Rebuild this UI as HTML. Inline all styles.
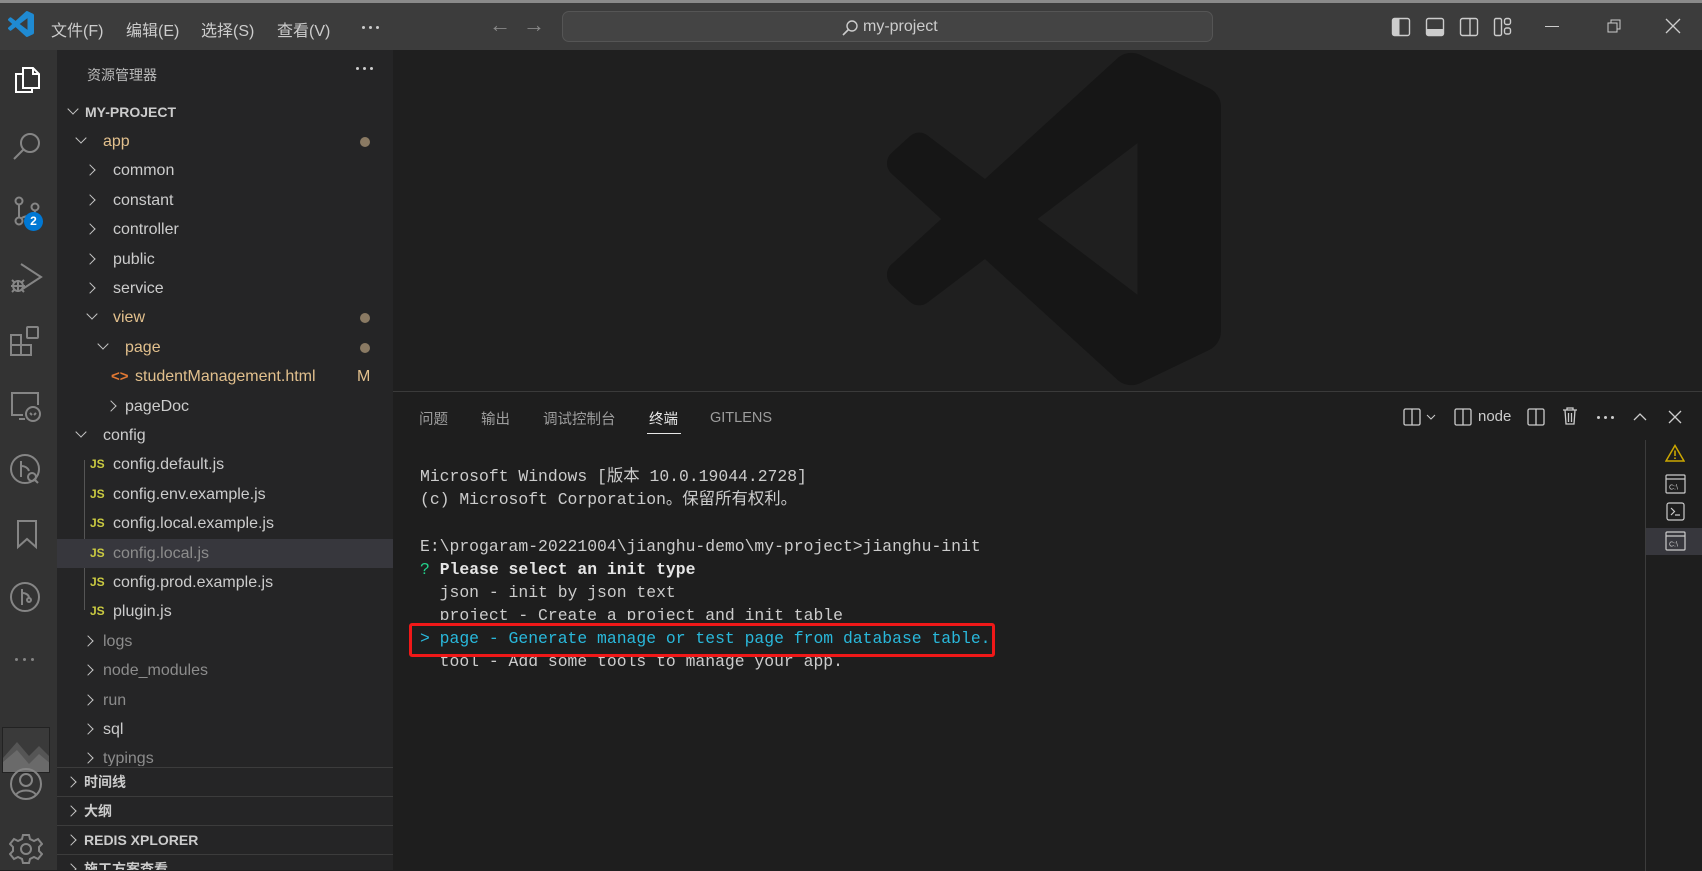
<!DOCTYPE html>
<html><head><meta charset="utf-8">
<style>
*{margin:0;padding:0;box-sizing:border-box}
body{width:1702px;height:870px;overflow:hidden;background:#1f1f1f;font-family:"Liberation Sans","Noto Sans CJK SC",sans-serif;color:#ccc;position:relative}
.a{position:absolute}
#title{left:0;top:0;width:1702px;height:50px;background:#3c3c3c;border-top:3px solid #8a8a8a}
.menu{top:14px;font-size:16px;color:#ccc}
#act{left:0;top:50px;width:57px;height:820px;background:#333}
#side{left:57px;top:50px;width:336px;height:820px;background:#252526;overflow:hidden}
.row{position:absolute;left:0;width:336px;height:29.4px;line-height:29.4px;font-size:16px;white-space:nowrap}
.chev{position:absolute;top:10px;width:8px;height:8px;border-right:1.4px solid #c5c5c5;border-bottom:1.4px solid #c5c5c5}
.r{transform:rotate(-45deg)}
.d{transform:rotate(45deg);top:7px}
.js{position:absolute;font-size:12px;font-weight:bold;color:#cbcb41;top:0}
.dot{position:absolute;left:303px;top:10px;width:10px;height:10px;border-radius:5px;background:#8a7a63}
.mod{color:#e2c08d}
.ign{color:#8c8c8c}
.sec{position:absolute;left:0;width:336px;height:29px;line-height:29px;font-size:14px;font-weight:bold;color:#ccc;border-top:1px solid #3c3c3c}
#panel{left:393px;top:391px;width:1309px;height:479px;background:#1e1e1e;border-top:1px solid #3a3a3a}
.tab{top:16px;font-size:14.5px;color:#9d9d9d}
.term{position:absolute;left:27px;font-family:"Liberation Mono","Noto Sans CJK SC",monospace;font-size:16.4px;color:#ccc;white-space:pre;line-height:23px}
.dots3{position:absolute;display:flex;gap:4px}
.dots3 i{display:block;width:3px;height:3px;border-radius:2px;background:#ccc}
</style></head><body>

<div id="title" class="a">
  <svg class="a" style="left:8px;top:8px" width="26" height="26" viewBox="0 0 100 100"><path fill="#1f8ad2" d="M96.46 10.8L75.86.87a6.23 6.23 0 0 0-7.1 1.21L29.33 38.04 12.16 25a4.16 4.16 0 0 0-5.32.24l-5.5 5a4.17 4.17 0 0 0 0 6.16L16.23 50 1.33 63.6a4.170 4.170 0 0 0 0 6.16l5.5 5a4.16 4.16 0 0 0 5.32.24l17.17-13.04 39.43 35.96a6.22 6.22 0 0 0 7.1 1.21l20.6-9.92a6.24 6.24 0 0 0 3.540-5.63V16.43a6.24 6.24 0 0 0-3.54-5.63zM75 72.7L45.08 50 75 27.3z"/></svg>
  <div class="a menu" style="left:51px">文件(F)</div>
  <div class="a menu" style="left:126px">编辑(E)</div>
  <div class="a menu" style="left:201px">选择(S)</div>
  <div class="a menu" style="left:277px">查看(V)</div>
  <div class="dots3" style="left:362px;top:23px"><i></i><i></i><i></i></div>
  <div class="a" style="left:489px;top:9px;font-size:22px;color:#888">←</div>
  <div class="a" style="left:523px;top:9px;font-size:22px;color:#888">→</div>
  <div class="a" style="left:562px;top:8px;width:651px;height:31px;background:#444;border:1px solid #555;border-radius:7px"></div>
  <svg class="a" style="left:841px;top:16px" width="18" height="18" viewBox="0 0 18 18"><circle cx="11" cy="7" r="5" fill="none" stroke="#ccc" stroke-width="1.4"/><path d="M7.5 10.5L2 16" stroke="#ccc" stroke-width="1.6"/></svg>
  <div class="a" style="left:863px;top:15px;font-size:16px;color:#ccc">my-project</div>
  <svg class="a" style="left:1391px;top:14px" width="20" height="20" viewBox="0 0 20 20"><rect x="1.5" y="1.5" width="17" height="17" rx="2" fill="none" stroke="#ccc" stroke-width="1.4"/><rect x="1.5" y="1.5" width="7" height="17" fill="#ccc"/></svg>
  <svg class="a" style="left:1425px;top:14px" width="20" height="20" viewBox="0 0 20 20"><rect x="1.5" y="1.5" width="17" height="17" rx="2" fill="none" stroke="#ccc" stroke-width="1.4"/><rect x="1.5" y="12" width="17" height="6.5" fill="#ccc"/></svg>
  <svg class="a" style="left:1459px;top:14px" width="20" height="20" viewBox="0 0 20 20"><rect x="1.5" y="1.5" width="17" height="17" rx="2" fill="none" stroke="#ccc" stroke-width="1.4"/><path d="M11 2v16" stroke="#ccc" stroke-width="1.4"/></svg>
  <svg class="a" style="left:1493px;top:14px" width="20" height="20" viewBox="0 0 20 20"><rect x="1.5" y="1.5" width="7" height="17" rx="1.5" fill="none" stroke="#ccc" stroke-width="1.4"/><rect x="11.5" y="1.5" width="6" height="6" rx="2" fill="none" stroke="#ccc" stroke-width="1.4"/><rect x="11.5" y="11" width="6" height="6" rx="2" fill="none" stroke="#ccc" stroke-width="1.4"/></svg>
  <div class="a" style="left:1545px;top:23px;width:14px;height:1px;background:#ccc"></div>
  <svg class="a" style="left:1607px;top:16px" width="14" height="14" viewBox="0 0 14 14"><rect x="1" y="4" width="9" height="9" fill="none" stroke="#ccc"/><path d="M4 4V1h9v9h-3" fill="none" stroke="#ccc"/></svg>
  <svg class="a" style="left:1665px;top:15px" width="16" height="16" viewBox="0 0 16 16"><path d="M1 1L15 15M15 1L1 15" stroke="#ccc" stroke-width="1.3"/></svg>
</div>

<div id="act" class="a">
  <svg class="a" style="left:11px;top:14px" width="32" height="32" viewBox="0 0 32 32" fill="none" stroke="#fff" stroke-width="2"><path d="M12 4h10l6 6v14H12z"/><path d="M22 4v6h6"/><path d="M12 10H5v18h16v-4"/></svg>
  <svg class="a" style="left:11px;top:80px" width="32" height="32" viewBox="0 0 32 32" fill="none" stroke="#858585" stroke-width="2"><circle cx="19" cy="13" r="9"/><path d="M12.5 19.5L3 29"/></svg>
  <svg class="a" style="left:11px;top:145px" width="32" height="32" viewBox="0 0 32 32" fill="none" stroke="#858585" stroke-width="2"><circle cx="8" cy="6" r="3.5"/><circle cx="8" cy="26" r="3.5"/><circle cx="24" cy="12" r="3.5"/><path d="M8 10v12M24 16c0 6-12 4-14 8"/></svg>
  <div class="a" style="left:24px;top:162px;width:19px;height:19px;border-radius:10px;background:#0078d4;color:#fff;font-size:12px;font-weight:bold;text-align:center;line-height:19px">2</div>
  <svg class="a" style="left:9px;top:210px" width="34" height="34" viewBox="0 0 34 34" fill="none" stroke="#858585" stroke-width="2"><path d="M12 4l20 13-20 13"/><circle cx="9" cy="26" r="5"/><path d="M2 26h14M9 20v12M3 20l3 3M15 20l-3 3M3 32l3-3M15 32l-3-3"/></svg>
  <svg class="a" style="left:9px;top:275px" width="34" height="34" viewBox="0 0 34 34" fill="none" stroke="#858585" stroke-width="2"><rect x="2" y="10" width="10" height="10"/><rect x="2" y="20" width="10" height="10"/><rect x="12" y="20" width="10" height="10"/><rect x="18" y="2" width="11" height="11" rx="1"/></svg>
  <svg class="a" style="left:9px;top:339px" width="34" height="34" viewBox="0 0 34 34" fill="none" stroke="#858585" stroke-width="2"><path d="M14 26H3V4h26v12M10 30h6"/><circle cx="24" cy="25" r="7"/><path d="M21 24l2 2M27 24l-2 2"/></svg>
  <svg class="a" style="left:9px;top:403px" width="34" height="34" viewBox="0 0 34 34" fill="none" stroke="#858585" stroke-width="2"><circle cx="16" cy="16" r="14"/><path d="M12 8v16M12 13c4 0 7 2 8 5"/><circle cx="23" cy="24" r="4"/><path d="M26 27l3 3"/></svg>
  <svg class="a" style="left:11px;top:468px" width="32" height="32" viewBox="0 0 32 32" fill="none" stroke="#858585" stroke-width="2"><path d="M7 3h18v26l-9-8-9 8z"/></svg>
  <svg class="a" style="left:9px;top:531px" width="34" height="34" viewBox="0 0 34 34" fill="none" stroke="#858585" stroke-width="2"><circle cx="16" cy="16" r="14"/><path d="M13 8v16M13 12c4 0 7 2 7 5"/><circle cx="20" cy="19" r="2"/></svg>
  <div class="dots3" style="left:15px;top:608px;gap:5px"><i style="background:#858585"></i><i style="background:#858585"></i><i style="background:#858585"></i></div>
  <div class="a" style="left:2px;top:677px;width:48px;height:46px;background:#3a3a3a;border:1px solid #222;overflow:hidden">
    <svg width="48" height="46" viewBox="0 0 48 46"><path d="M0 30L14 14 26 28 36 18 48 30V46H0z" fill="#555"/><path d="M0 34L14 22 26 36 36 26 48 36V46H0z" fill="#6a6a6a"/></svg>
  </div>
  <svg class="a" style="left:9px;top:717px" width="34" height="34" viewBox="0 0 34 34" fill="none" stroke="#858585" stroke-width="2"><circle cx="17" cy="17" r="15"/><circle cx="17" cy="13" r="6"/><path d="M7 28c3-6 17-6 20 0"/></svg>
  <svg class="a" style="left:9px;top:782px" width="34" height="34" viewBox="0 0 34 34" fill="none" stroke="#858585" stroke-width="2"><circle cx="17" cy="17" r="5"/><path d="M14 3h6l1 4 4 2 4-2 4 5-3 3v4l3 3-4 5-4-2-4 2-1 4h-6l-1-4-4-2-4 2-4-5 3-3v-4l-3-3 4-5 4 2 4-2z"/></svg>
</div>

<div id="side" class="a">
  <div class="a" style="left:30px;top:15px;font-size:14px;color:#bbb">资源管理器</div>
  <div class="dots3" style="left:299px;top:17px"><i></i><i></i><i></i></div>
  <div class="a" style="left:27px;top:410px;width:1px;height:150px;background:#555"></div>

  <div class="row" style="top:47.5px"><span class="chev d" style="left:12px"></span><span class="a" style="left:28px;font-size:14px;font-weight:bold">MY-PROJECT</span></div>
  <div class="row mod" style="top:77px"><span class="chev d" style="left:20px"></span><span class="a" style="left:46px">app</span><span class="dot"></span></div>
  <div class="row" style="top:106.4px"><span class="chev r" style="left:29px"></span><span class="a" style="left:56px">common</span></div>
  <div class="row" style="top:135.8px"><span class="chev r" style="left:29px"></span><span class="a" style="left:56px">constant</span></div>
  <div class="row" style="top:165.2px"><span class="chev r" style="left:29px"></span><span class="a" style="left:56px">controller</span></div>
  <div class="row" style="top:194.6px"><span class="chev r" style="left:29px"></span><span class="a" style="left:56px">public</span></div>
  <div class="row" style="top:224px"><span class="chev r" style="left:29px"></span><span class="a" style="left:56px">service</span></div>
  <div class="row mod" style="top:253.4px"><span class="chev d" style="left:31px"></span><span class="a" style="left:56px">view</span><span class="dot"></span></div>
  <div class="row mod" style="top:282.8px"><span class="chev d" style="left:42px"></span><span class="a" style="left:68px">page</span><span class="dot"></span></div>
  <div class="row mod" style="top:312.2px"><span class="a" style="left:54px;color:#e37933;font-weight:bold;font-size:15px">&lt;&gt;</span><span class="a" style="left:78px">studentManagement.html</span><span class="a" style="left:300px;font-size:16px">M</span></div>
  <div class="row" style="top:341.6px"><span class="chev r" style="left:50px"></span><span class="a" style="left:68px">pageDoc</span></div>
  <div class="row" style="top:371px"><span class="chev d" style="left:20px"></span><span class="a" style="left:46px">config</span></div>
  <div class="row" style="top:400.4px"><span class="js" style="left:33px">JS</span><span class="a" style="left:56px">config.default.js</span></div>
  <div class="row" style="top:429.8px"><span class="js" style="left:33px">JS</span><span class="a" style="left:56px">config.env.example.js</span></div>
  <div class="row" style="top:459.2px"><span class="js" style="left:33px">JS</span><span class="a" style="left:56px">config.local.example.js</span></div>
  <div class="row" style="top:488.6px;background:#37373d"><span class="js" style="left:33px">JS</span><span class="a ign" style="left:56px">config.local.js</span></div>
  <div class="row" style="top:518px"><span class="js" style="left:33px">JS</span><span class="a" style="left:56px">config.prod.example.js</span></div>
  <div class="row" style="top:547.4px"><span class="js" style="left:33px">JS</span><span class="a" style="left:56px">plugin.js</span></div>
  <div class="row ign" style="top:576.8px"><span class="chev r" style="left:27px"></span><span class="a" style="left:46px">logs</span></div>
  <div class="row ign" style="top:606.2px"><span class="chev r" style="left:27px"></span><span class="a" style="left:46px">node_modules</span></div>
  <div class="row ign" style="top:635.6px"><span class="chev r" style="left:27px"></span><span class="a" style="left:46px">run</span></div>
  <div class="row" style="top:665px"><span class="chev r" style="left:27px"></span><span class="a" style="left:46px">sql</span></div>
  <div class="row ign" style="top:694.4px;height:22px;overflow:hidden"><span class="chev r" style="left:27px"></span><span class="a" style="left:46px">typings</span></div>

  <div class="sec" style="top:717px;background:#252526"><span class="chev r" style="left:10px"></span><span class="a" style="left:27px">时间线</span></div>
  <div class="sec" style="top:746px"><span class="chev r" style="left:10px"></span><span class="a" style="left:27px">大纲</span></div>
  <div class="sec" style="top:775px"><span class="chev r" style="left:10px"></span><span class="a" style="left:27px">REDIS XPLORER</span></div>
  <div class="sec" style="top:804px"><span class="chev r" style="left:10px"></span><span class="a" style="left:27px">施工方案查看</span></div>
</div>

<svg class="a" style="left:887px;top:52px" width="334" height="339" viewBox="0 0 100 101.5" preserveAspectRatio="none"><path fill="#161616" d="M96.46 10.8L75.86.87a6.23 6.23 0 0 0-7.1 1.21L29.33 38.04 12.160 25a4.16 4.16 0 0 0-5.32.24l-5.5 5a4.17 4.17 0 0 0 0 6.16L16.23 50 1.33 63.6a4.17 4.17 0 0 0 0 6.16l5.5 5a4.16 4.16 0 0 0 5.32.24l17.17-13.04 39.43 35.96a6.22 6.22 0 0 0 7.1 1.21l20.6-9.92a6.24 6.24 0 0 0 3.54-5.63V16.43a6.24 6.24 0 0 0-3.54-5.63zM75 72.7L45.08 50 75 27.3z"/></svg>

<div id="panel" class="a">
  <div class="a tab" style="left:26px">问题</div>
  <div class="a tab" style="left:88px">输出</div>
  <div class="a tab" style="left:150px">调试控制台</div>
  <div class="a tab" style="left:256px;color:#e7e7e7">终端</div>
  <div class="a" style="left:254px;top:41px;width:34px;height:1px;background:#e7e7e7"></div>
  <div class="a tab" style="left:317px;top:18px">GITLENS</div>

  <svg class="a" style="left:1010px;top:16px" width="18" height="18" viewBox="0 0 18 18" fill="none" stroke="#ccc" stroke-width="1.3"><rect x="1" y="1" width="16" height="16" rx="1.5"/><path d="M9 1v16"/></svg>
  <svg class="a" style="left:1033px;top:22px" width="10" height="6" viewBox="0 0 10 6" fill="none" stroke="#ccc"><path d="M1 1l4 4 4-4"/></svg>
  <svg class="a" style="left:1061px;top:16px" width="18" height="18" viewBox="0 0 18 18" fill="none" stroke="#ccc" stroke-width="1.3"><rect x="1" y="1" width="16" height="16" rx="1.5"/><path d="M9 1v16"/></svg>
  <div class="a" style="left:1085px;top:16px;font-size:15px;color:#ccc">node</div>
  <svg class="a" style="left:1134px;top:16px" width="18" height="18" viewBox="0 0 18 18" fill="none" stroke="#ccc" stroke-width="1.3"><rect x="1" y="1" width="16" height="16" rx="1.5"/><path d="M9 1v16"/></svg>
  <svg class="a" style="left:1169px;top:15px" width="16" height="18" viewBox="0 0 16 18" fill="none" stroke="#ccc" stroke-width="1.3"><path d="M1 3h14M5 3V1h6v2M3 3l1 14h8l1-14M6.5 6v9M9.5 6v9"/></svg>
  <div class="dots3" style="left:1204px;top:24px"><i></i><i></i><i></i></div>
  <svg class="a" style="left:1240px;top:20px" width="14" height="9" viewBox="0 0 14 9" fill="none" stroke="#ccc" stroke-width="1.3"><path d="M1 8l6-6 6 6"/></svg>
  <svg class="a" style="left:1275px;top:18px" width="14" height="14" viewBox="0 0 14 14" stroke="#ccc" stroke-width="1.3"><path d="M1 1l12 12M13 1L1 13"/></svg>

  <div class="a" style="left:1252px;top:48px;width:1px;height:431px;background:#3c3c3c"></div>
  <div class="a" style="left:1253px;top:136px;width:56px;height:27px;background:#37373d"></div>
  <svg class="a" style="left:1272px;top:52px" width="20" height="18" viewBox="0 0 20 18"><path d="M10 1.5L19 17H1z" fill="none" stroke="#cca700" stroke-width="1.5"/><path d="M10 6.5v5.5M10 13.5v1.5" stroke="#cca700" stroke-width="1.6"/></svg>
  <svg class="a" style="left:1272px;top:82px" width="21" height="20" viewBox="0 0 21 20" fill="none" stroke="#ccc" stroke-width="1.2"><rect x="1" y="1" width="19" height="18" rx="1"/><path d="M1 5h19"/><text x="4" y="15.5" font-size="7" fill="#ccc" stroke="none" font-family="Liberation Sans">C:\</text></svg>
  <svg class="a" style="left:1273px;top:110px" width="19" height="19" viewBox="0 0 19 19" fill="none" stroke="#ccc" stroke-width="1.2"><rect x="1" y="1" width="17" height="17" rx="2"/><path d="M5 6l3.5 3.5L5 13M9 13h5"/></svg>
  <svg class="a" style="left:1272px;top:139px" width="21" height="20" viewBox="0 0 21 20" fill="none" stroke="#ccc" stroke-width="1.2"><rect x="1" y="1" width="19" height="18" rx="1"/><path d="M1 5h19"/><text x="4" y="15.5" font-size="7" fill="#ccc" stroke="none" font-family="Liberation Sans">C:\</text></svg>

  <div class="term" style="top:73px">Microsoft Windows [版本 10.0.19044.2728]</div>
  <div class="term" style="top:96px">(c) Microsoft Corporation。保留所有权利。</div>
  <div class="term" style="top:143px">E:\progaram-20221004\jianghu-demo\my-project&gt;jianghu-init</div>
  <div class="term" style="top:166px"><span style="color:#23d18b">?</span> <b style="color:#e5e5e5">Please select an init type</b></div>
  <div class="term" style="top:189px">  json - init by json text</div>
  <div class="term" style="top:212px;height:16px;overflow:hidden">  project - Create a project and init table</div>
  <div class="term" style="top:235px;color:#29b8db">&gt; page - Generate manage or test page from database table.</div>
  <div class="term" style="top:258px">  tool - Add some tools to manage your app.</div>
  <div class="a" style="left:16px;top:231px;width:586px;height:34px;border:3.5px solid #f01818;border-radius:3px"></div>
</div>
</body></html>
